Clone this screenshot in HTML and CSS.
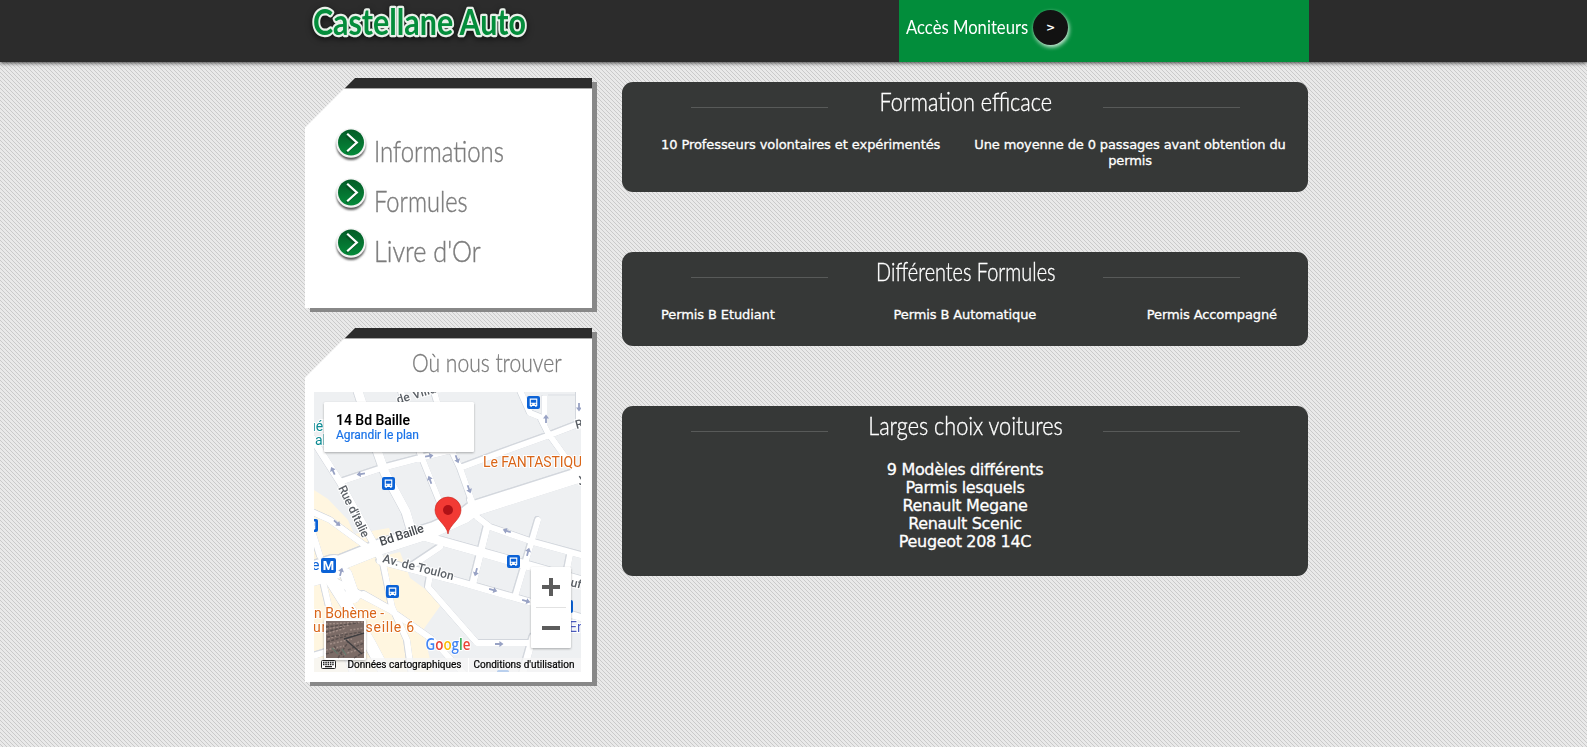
FILE: index.html
```html
<!DOCTYPE html>
<html lang="fr">
<head>
<meta charset="utf-8">
<title>Castellane Auto</title>
<link rel="stylesheet" href="styles.css">
</head>
<body>
<header class="topbar">
  <div class="topbar-inner">
    <svg class="logo" width="240" height="50" viewBox="0 0 240 50" role="img">
      <text class="logo-text logo-halo" x="8" y="35" textLength="213" lengthAdjust="spacingAndGlyphs">Castellane Auto</text>
    </svg>
    <div class="access">
      <span class="access-label"><span class="squeeze">Accès Moniteurs</span></span>
      <a class="access-button">&gt;</a>
    </div>
  </div>
</header>

<main class="page">
  <aside class="side">
    <div class="card-shadow">
      <section class="card card-menu">
        <ul class="menu">
          <li><svg class="bullet" width="34" height="36" viewBox="0 0 34 36"><use href="#bullet"/></svg><span class="menu-label"><span class="squeeze w-info">Informations</span></span></li>
          <li><svg class="bullet" width="34" height="36" viewBox="0 0 34 36"><use href="#bullet"/></svg><span class="menu-label"><span class="squeeze w-form">Formules</span></span></li>
          <li><svg class="bullet" width="34" height="36" viewBox="0 0 34 36"><use href="#bullet"/></svg><span class="menu-label"><span class="squeeze w-livre">Livre d'Or</span></span></li>
        </ul>
      </section>
    </div>
    <div class="card-shadow">
      <section class="card card-map">
        <h2 class="map-title"><span class="squeeze">Où nous trouver</span></h2>
        <svg class="map" width="267" height="280" viewBox="0 0 267 280">
          <defs>
            <g id="bullet">
              <circle cx="17" cy="18.5" r="14.5" fill="#555" filter="url(#soft)"/>
              <circle cx="17" cy="16" r="14.8" fill="#f4f4f4"/>
              <circle cx="17" cy="15.500" r="13" fill="url(#green)"/>
              <path d="M13 8 L22.500 16.2 L13 24.5" fill="none" stroke="#0a3d1c" stroke-width="2" opacity=".5" transform="translate(-.6 1.2)"/>
              <path d="M13.200 6.800 L22.800 15.500 L13.200 24.200" fill="none" stroke="#fff" stroke-width="2.2"/>
            </g>
            <linearGradient id="green" x1="0" y1="0" x2="0" y2="1"><stop offset="0" stop-color="#045c27"/><stop offset="1" stop-color="#058a3a"/></linearGradient>
            <filter id="soft" x="-20%" y="-20%" width="140%" height="140%"><feGaussianBlur stdDeviation="1"/></filter>
            <filter id="lift" x="-20%" y="-20%" width="140%" height="150%"><feDropShadow dx="0" dy="1" stdDeviation="1.3" flood-color="#000" flood-opacity=".3"/></filter>
            <g id="roads" fill="none" stroke-linejoin="round" stroke-linecap="round">
              <path stroke-width="6" d="M86 -4L106 61L129 118M119 -4L136 55L146 76L161 118M156 108L163 125L176 135L219 150L267 163L275 165M26 90L68 76L110 65L142 57M146 76L186 61L236 43L275 28M204 -6L216 21L226 25L234 41L265 84M265 -4V34M116 183L114 195L163 251H219M256 163L251 188M224 128L216 155L201 205M126 155L99 173M19 188L76 218L119 248L152 284M69 171L78 215L93 248L98 284M36 206L50 202L78 218M-4 119L16 128L53 155M-4 132L6 164M8 185L15 215L40 284M-4 265L12 260"/>
              <path stroke-width="7" d="M173 135L159 191M66 169L139 188L216 210L275 228M219 245L208 284M-4 43L26 90L58 148L68 170"/>
              <path stroke-width="9" d="M43 -4L64 61L71 81L92 120L97 137M105 143L173 162L219 175L275 191"/>
              <path stroke-width="12" d="M12 180L36 218L55 250L73 284M32 182L40 205"/>
              <path stroke-width="15" d="M275 80L159 117L150 124L119 138L66 155L26 171L-6 180"/>
              <path stroke-width="24" d="M-2 182L20 175"/>
            </g>
            <g id="bus">
              <rect x="-6.5" y="-6.5" width="13" height="13" rx="2" fill="#0b62d6"/>
              <path fill="#fff" d="M-3.8 -4H3.8V3.4H3V4.5H1.8V3.4H-1.8V4.5H-3V3.4H-3.8Z"/>
              <path fill="#0b62d6" d="M-2.7 -2.7H2.7V.2H-2.7ZM-2.6 1.2H-1.3V2.3H-2.6ZM1.3 1.2H2.6V2.3H1.3Z"/>
            </g>
            <path id="arrow" d="M-.9 4V-.4H-3L0 -4.5L3 -.4H.9V4Z" fill="#98a2c4"/>
          </defs>
          <rect width="267" height="280" fill="#eef0f2"/>
          <path fill="#fff6e0" d="M0 98L14 107L34 128L40 142L75 136L80 148L60 170H0ZM20 176L86 160L96 186L129 210L109 238L119 280H0V190Z"/>
          <path fill="none" stroke="#dcdfe4" d="M228 3V27M234 3H262V34"/>
          <use href="#roads" class="road-edge"/>
          <use href="#roads" stroke="#fff"/>
          <path d="M228 4H233V38L228 30Z" fill="#fff"/>

          <use href="#arrow" transform="translate(232 27)"/>
          <use href="#arrow" transform="translate(265 15) rotate(180)"/>
          <use href="#arrow" transform="translate(115 64) rotate(80)"/>
          <use href="#arrow" transform="translate(47 82) rotate(-100)"/>
          <use href="#arrow" transform="translate(19 79) rotate(-25)"/>
          <use href="#arrow" transform="translate(143 67) rotate(160)"/>
          <use href="#arrow" transform="translate(116 88) rotate(-20)"/>
          <use href="#arrow" transform="translate(155 97) rotate(160)"/>
          <use href="#arrow" transform="translate(193 139) rotate(-72)"/>
          <use href="#arrow" transform="translate(214 160) rotate(15)"/>
          <use href="#arrow" transform="translate(162 180) rotate(195)"/>
          <use href="#arrow" transform="translate(179 198) rotate(105)"/>
          <use href="#arrow" transform="translate(212 209) rotate(105)"/>
          <use href="#arrow" transform="translate(185 252) rotate(90)"/>
          <use href="#arrow" transform="translate(23 131) rotate(130)"/>
          <use href="#arrow" transform="translate(27 180) rotate(15)"/>

          <g class="street">
            <text transform="translate(84 12) rotate(-17)" textLength="47">de Villas</text>
            <text transform="translate(24 96) rotate(64)" textLength="56">Rue d'Italie</text>
            <text class="street-main" transform="translate(67 154) rotate(-18)" textLength="46">Bd Baille</text>
            <text transform="translate(68 170) rotate(14.5)" textLength="73">Av. de Toulon</text>
            <text transform="translate(262.500 37) rotate(-15)">R</text>
            <text transform="translate(256 194) rotate(14)">uff</text>
            <text transform="translate(266 94) rotate(-35)">J</text>
          </g>
          <g class="place">
            <text class="orange" x="169" y="75" textLength="107">Le FANTASTIQUE</text>
            <text class="teal" x="-6" y="39">ué</text>
            <text class="teal" x="1" y="53">al</text>
            <text class="orange" x="0" y="226" textLength="70" lengthAdjust="spacingAndGlyphs">n Bohème -</text>
            <text class="orange" x="-1" y="240" textLength="101">ura Marseille 6</text>
            <text class="violet" x="255" y="240">En</text>
            <text class="blue" x="-2" y="178">e</text>
          </g>
          <use href="#bus" x="219.500" y="10.500"/><use href="#bus" x="74.500" y="91.500"/><use href="#bus" x="199.500" y="169.500"/>
          <use href="#bus" x="78.500" y="199.500"/><use href="#bus" x="-2.500" y="133.500"/><use href="#bus" x="252.500" y="214.500"/>
          <rect x="183" y="278" width="12" height="4" rx="1.5" fill="#0b62d6"/>
          <rect x="7" y="166" width="15" height="15" rx="2" fill="#0b62d6"/>
          <text class="metro" x="14.5" y="178" text-anchor="middle">M</text>

          <path d="M134 142C132.5 132 121 128 121 118A13 13 0 0 1 147 118C147 128 135.5 132 134 142Z" fill="#f23a34" stroke="#c9271f" stroke-width=".6"/>
          <circle cx="134" cy="118" r="5" fill="#b01217"/>

          <text class="google" x="111.5" y="258" textLength="45" lengthAdjust="spacingAndGlyphs"><tspan fill="#4285f4">G</tspan><tspan fill="#ea4335">o</tspan><tspan fill="#fbbc05">o</tspan><tspan fill="#4285f4">g</tspan><tspan fill="#34a853">l</tspan><tspan fill="#ea4335">e</tspan></text>

          <rect y="266" width="267" height="14" fill="#f5f5f5" opacity=".75"/>
          <path d="M154.5 266V280" stroke="#fff"/>
          <g class="legal">
            <text x="33.5" y="275.8" textLength="114">Données cartographiques</text>
            <text x="159.5" y="275.8" textLength="101">Conditions d'utilisation</text>
          </g>
          <rect x="7.500" y="268.500" width="14" height="8" rx="1" fill="#fff" stroke="#222"/>
          <path d="M9 270.500H20.500M9 272.500H20.500" stroke="#222" stroke-width="1.300" stroke-dasharray="1.5 .8"/><path d="M11 274.700H18" stroke="#222" stroke-width="1.200"/>

          <g filter="url(#lift)"><rect x="10" y="227" width="42" height="41" rx="2" fill="#fff"/></g>
          <rect x="12" y="229" width="38" height="37" fill="#7b6b66"/>
          <g fill="none" stroke-width="1.4">
            <path stroke="#a08d86" stroke-dasharray="2 1.500" d="M12 232L50 230M12 237L36 233M12 242L32 236M14 247L34 240M16 252L38 247M12 258L30 254M36 238L50 236M38 244L50 240M30 262L50 256M40 252L50 248"/>
            <path stroke="#5a504e" stroke-dasharray="3 1.500" d="M12 235L44 231M12 240L30 235M13 245L48 240M13 250L32 244M24 266L34 250M12 262L26 258M34 258L50 251M40 266L50 260M20 254L30 265"/>
            <path stroke="#3f3e40" d="M30 247L50 241M32 248L48 262"/>
            <path stroke="#66766a" d="M28 257L32 263M18 256L24 262"/>
          </g>

          <g filter="url(#lift)"><rect x="10" y="10" width="150" height="50" rx="1.500" fill="#fff"/></g>
          <text class="addr" x="22" y="33.300" textLength="74">14 Bd Baille</text>
          <text class="enlarge" x="22" y="47.300" textLength="83">Agrandir le plan</text>

          <g filter="url(#lift)"><rect x="217" y="175" width="40" height="81" rx="1.500" fill="#fff"/></g>
          <path d="M222 215.500H252" stroke="#e2e2e2"/>
          <path d="M228 195H246M237 186V204M228 236H246" stroke="#5c5c5c" stroke-width="4"/>
        </svg>
      </section>
    </div>
  </aside>

  <div class="content">
    <section class="panel panel-training">
      <h2 class="panel-title"><i class="rule"></i><span class="title-slot"><span class="squeeze">Formation efficace</span></span><i class="rule"></i></h2>
      <div class="training">
        <p class="experts">10 Professeurs volontaires et expérimentés</p>
        <p class="passes">Une moyenne de 0 passages avant obtention du permis</p>
      </div>
    </section>
    <section class="panel panel-formulas">
      <h2 class="panel-title"><i class="rule"></i><span class="title-slot"><span class="squeeze">Différentes Formules</span></span><i class="rule"></i></h2>
      <div class="formulas"><span class="formula-first">Permis B Etudiant</span><span>Permis B Automatique</span><span>Permis Accompagné</span></div>
    </section>
    <section class="panel panel-cars">
      <h2 class="panel-title"><i class="rule"></i><span class="title-slot"><span class="squeeze">Larges choix voitures</span></span><i class="rule"></i></h2>
      <ul class="cars"><li>9 Modèles différents</li><li>Parmis lesquels</li><li>Renault Megane</li><li>Renault Scenic</li><li>Peugeot 208 14C</li></ul>
    </section>
  </div>
</main>
</body>
</html>
```
FILE: styles.css
```css
* { box-sizing: border-box; }
body, h2, p, ul { margin: 0; padding: 0; }
ul { list-style: none; }
html { height: 100%; overflow: hidden; }
body {
  min-height: 747px;
  background: #e9e9e9 url("data:image/svg+xml,%3Csvg xmlns='http://www.w3.org/2000/svg' width='4' height='4' shape-rendering='crispEdges'%3E%3Cpath fill='%23cacaca' d='M0 0h1v1H0zM1 1h1v1H1zM2 2h1v1H2zM3 3h1v1H3z'/%3E%3C/svg%3E");
  font-family: "DejaVu Sans", Verdana, sans-serif;
}
.squeeze { display: inline-block; white-space: nowrap; transform-origin: 0 50%; }

.topbar { height: 62px; background: #2c2c2c; box-shadow: 0 1px 4px rgba(0, 0, 0, .75); }
.topbar-inner { display: flex; justify-content: space-between; width: 1004px; height: 62px; margin-left: 305px; }
.logo { overflow: visible; filter: drop-shadow(0 2px 3px rgba(0, 0, 0, .6)); }
.logo-text {
  font: 700 37px Lato, sans-serif;
  fill: #048d3b;
  stroke: #e9f1ea;
  stroke-width: 4.5px;
  stroke-linejoin: round;
  paint-order: stroke;
}
.access { display: flex; align-items: flex-start; width: 410px; height: 62px; padding: 10px 0 0 7px; background: #028d3b; }
.access-label { width: 122px; padding-top: 5px; color: #fff; font: 400 19px/23px Lato, sans-serif; }
.access-label .squeeze { transform: scaleX(.877); }
.access-button {
  width: 35px; height: 35px; margin-left: 5px;
  border-radius: 50%;
  background: #121212;
  box-shadow: 1px 2px 4px rgba(255, 255, 255, .85);
  color: #fff; font-size: 11px; font-weight: bold; line-height: 35px; text-align: center;
}

.page { display: flex; gap: 30px; margin-left: 305px; padding-top: 16px; }
.side { display: flex; flex-direction: column; gap: 20px; width: 287px; }
.card-shadow { filter: drop-shadow(5px 4px .6px #888); }
.card {
  background: #fff linear-gradient(#2c2c2c 0 10px, #a9a9a9 10px 11px, #fff 11px);
  clip-path: polygon(50px 0, 100% 0, 100% 100%, 0 100%, 0 50px);
}
.card-menu { height: 230px; padding: 49px 0 0 29px; }
.menu li { display: flex; height: 50px; }
.bullet { flex: none; overflow: visible; }
.menu-label { padding: 6px 0 0 6px; color: #7c7c7c; font: 300 29px/35px Lato, sans-serif; -webkit-text-stroke: .4px #7c7c7c; }
.w-info { transform: scaleX(.825); }
.w-form { transform: scaleX(.815); }
.w-livre { transform: scaleX(.87); }
.card-map { height: 354px; padding: 19px 0 0 9px; }
.map-title { height: 45px; padding-left: 98px; color: #7c7c7c; font: 300 25px/30px Lato, sans-serif; -webkit-text-stroke: .3px #7c7c7c; }
.map-title .squeeze { transform: scaleX(.843); }
.map { display: block; }

.road-edge { stroke: #d3d7dd; filter: drop-shadow(.7px .7px 0 #d3d7dd) drop-shadow(-.7px -.7px 0 #d3d7dd); }
.street, .place, .legal, .addr, .enlarge, .metro { font-family: Roboto, sans-serif; }
.street { font-size: 12px; font-weight: 500; fill: #5b6066; stroke: #fff; stroke-width: 2px; paint-order: stroke; }
.street-main { font-size: 12.5px; fill: #44484d; }
.place { font-size: 14px; stroke: #fff; stroke-width: 2px; paint-order: stroke; }
.orange { fill: #d96518; }
.teal { fill: #0b8a92; }
.violet { fill: #4959bd; }
.blue { fill: #0b62d6; }
.metro { font-size: 13px; font-weight: 700; fill: #fff; }
.google { font: 600 17px "Open Sans", sans-serif; stroke: #fff; stroke-width: 2px; paint-order: stroke; }
.legal { font-size: 10px; fill: #000; stroke: #000; stroke-width: .2px; }
.addr { font-size: 14px; font-weight: 600; fill: #000; }
.enlarge { font-size: 12px; fill: #1a73e8; stroke: #1a73e8; stroke-width: .2px; }

.content { display: flex; flex-direction: column; gap: 60px; width: 686px; padding-top: 4px; }
.panel { padding-top: 4px; border-radius: 11px; background: #363837; color: #fff; }
.panel-training { height: 110px; }
.panel-formulas { height: 94px; }
.panel-cars { height: 170px; }
.panel-title { display: flex; justify-content: space-between; width: 549px; height: 30px; margin-left: 69px; font: 300 25px/30px Lato, sans-serif; -webkit-text-stroke: .35px #fff; }
.rule { width: 137px; height: 1px; margin-top: 21px; background: #585a59; }
.title-slot { display: flex; justify-content: center; flex: 1; min-width: 0; }
.title-slot .squeeze { transform: scaleX(.865); transform-origin: 50% 50%; }
.panel-formulas .squeeze { transform: scaleX(.795); }
.training, .formulas, .cars { -webkit-text-stroke: .3px #fff; }
.training { display: flex; gap: 34px; padding: 21px 22px 0 39px; font-size: 13px; line-height: 16px; }
.experts { width: 279px; letter-spacing: -.08px; white-space: nowrap; }
.passes { width: 312px; letter-spacing: -.12px; text-align: center; }
.formulas { display: flex; justify-content: space-between; padding: 21px 31px 0 39px; font-size: 13px; line-height: 16px; letter-spacing: -.1px; }
.formula-first { width: 122px; }
.cars { padding-top: 21px; font-size: 16px; line-height: 18px; letter-spacing: -.34px; text-align: center; }
```
